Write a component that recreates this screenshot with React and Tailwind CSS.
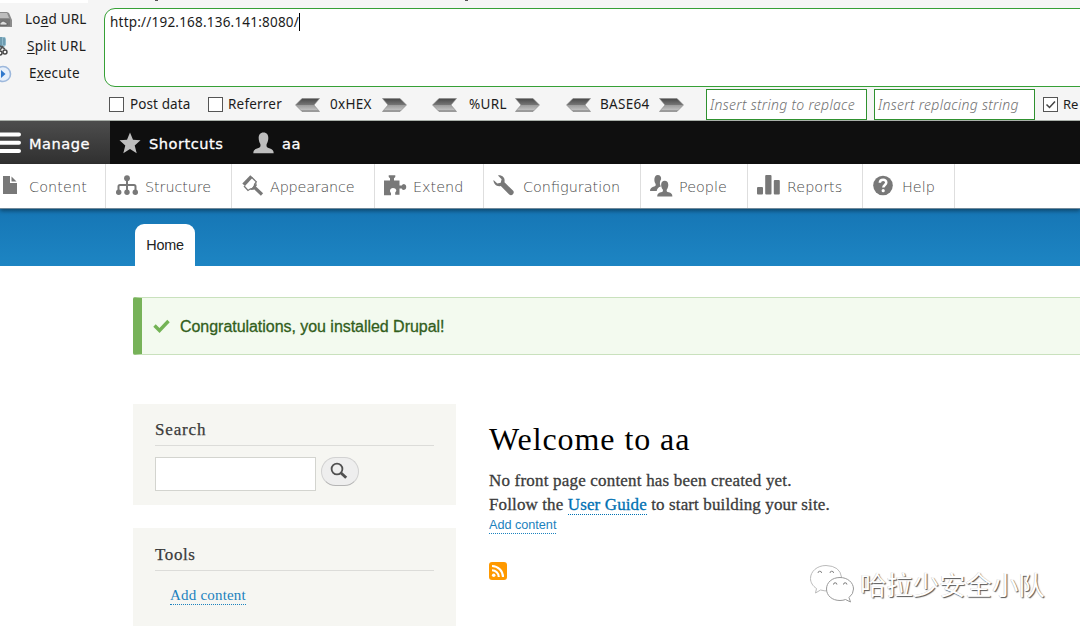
import React from "react";

const sans = "font-['Noto_Sans','Open_Sans',sans-serif]";
const dejavu = "font-['DejaVu_Sans',sans-serif]";
const arial = "font-['Liberation_Sans',Arial,sans-serif]";
const serif = "font-['Liberation_Serif',Georgia,serif]";

function Arrow({ flip, className }) {
  return (
    <svg width="25" height="14" viewBox="0 0 25 14" className={`shrink-0 ${flip ? "-scale-x-100" : ""} ${className || ""}`}>
      <defs>
        <linearGradient id="ar" x1="0" y1="0" x2="0" y2="1">
          <stop offset="0" stopColor="#484848" />
          <stop offset="0.48" stopColor="#757575" />
          <stop offset="0.5" stopColor="#9a9a9a" />
          <stop offset="0.85" stopColor="#bdbdbd" />
          <stop offset="1" stopColor="#777" />
        </linearGradient>
      </defs>
      <path d="M.5 .5H18L24.500 7 18 13.500H.5L6 7Z" fill="url(#ar)" stroke="#888" strokeWidth=".6" />
    </svg>
  );
}

function Box({ checked, className }) {
  return (
    <span className={`block size-[15px] shrink-0 border border-[#555] bg-white ${className}`}>
      {checked && (
        <svg viewBox="0 0 13 13" className="size-[13px]">
          <path d="M2.500 6.500l3 3 5.500-6" fill="none" stroke="#444" strokeWidth="1.500" />
        </svg>
      )}
    </span>
  );
}

const icons = {
  content: (
    <>
      <path d="M3 1h7v7h7v11H3z" />
      <path d="M11.500 1.500v5h5z" />
    </>
  ),
  structure: (
    <>
      <circle cx="11" cy="3.200" r="2.900" />
      <path d="M11 4v14M2.500 17v-5.500q0-1.500 1.500-1.500h14q1.500 0 1.500 1.500V17M11 10v7" fill="none" stroke="#787878" strokeWidth="2" />
      <circle cx="2.700" cy="17.300" r="2.700" />
      <circle cx="11" cy="17.300" r="2.700" />
      <circle cx="19.300" cy="17.300" r="2.700" />
    </>
  ),
  appearance: (
    <>
      <path d="M.3 8.500L8.300 .2l2.500 2.300L3 11z" />
      <path d="M9.800 2.500l4.500 4.300-1.700 2.500-.8 4-3.300.5-2.500 1.700L2 11" fill="none" stroke="#787878" strokeWidth="1.300" />
      <path d="M8 15l6.500-7 .2 2.500-3 4.200z" />
      <path d="M11.500 11.500l8.500 8" stroke="#787878" strokeWidth="3.200" fill="none" />
    </>
  ),
  extend: (
    <path d="M0 5.500h6V3.200L4.700 2V.3h6.600V2L10 3.200v2.300h5.500v5h2.200q.5-1.600 2.300-1.600 2.300.4 2.300 3.100t-2.300 3.100q-1.800 0-2.300-1.600h-2.200v6.200h-4.300v-2.300q1.300-.8 1.100-2.300-.6-2.200-3.300-2.200T6 15.700q-.1 1.500 1 2.300v2.200H0z" />
  ),
  config: (
    <path d="M5 .4c3.600-.7 7 2 6.600 5.600l-.1 1.200 8.700 8.600c1.900 2.200-1.300 6-4 3.800L7.800 11C4 12.200.2 9 .5 4.900l3.800 3.600 3.400-.8.900-3.500z" />
  ),
  people: (
    <>
      <path d="M7.700 0c2.500 0 3.700 1.800 3.400 4.200-.8 1.300-1.200 2.500-1.200 4.300.2 1.500.7 2.300 1 3-2.500.7-3.600 1.800-4.200 4.500H0c0-2.700 1.500-3.700 4.800-4.800 1.300-.7 1-1.700.6-2.800C3.800 6.700 3.800 0 7.700 0z" />
      <path d="M14.700 5.700c4.500 0 4.300 6.300 2.100 8.700-.5 1.800.1 2.300 1.900 2.800 2.500.8 3.700 1.500 3.700 4.200H7.200c0-2.700 1.200-3.400 3.700-4.200 1.800-.5 2.400-1 1.900-2.800-2.300-2.400-2.600-8.700 1.900-8.700z" />
    </>
  ),
  reports: (
    <>
      <rect x="0" y="12" width="6" height="7.500" rx="1" />
      <rect x="8.200" y="0" width="6.300" height="19.500" rx="1" />
      <rect x="16.800" y="5" width="6" height="14.500" rx="1" />
    </>
  ),
  help: (
    <>
      <circle cx="10" cy="10.500" r="9.800" />
      <path d="M6.800 7.800c.2-4 6.600-4 6.500-.2 0 2.300-3 2.400-3 5" fill="none" stroke="#fff" strokeWidth="2.500" />
      <circle cx="10.200" cy="15.700" r="1.600" fill="#fff" />
    </>
  ),
};

const menu = [
  ["content", "Content", "w-[106px] pl-0", "w-[29px]", "tracking-[0.1px]"],
  ["structure", "Structure", "w-[126px] pl-[10px]", "w-[29px]", "tracking-[-0.1px]"],
  ["appearance", "Appearance", "w-[143px] pl-[10px]", "w-[28px]", "tracking-[-0.2px]"],
  ["extend", "Extend", "w-[109px] pl-[9px]", "w-[29px]", ""],
  ["config", "Configuration", "w-[157px] pl-[9px]", "w-[30px]", ""],
  ["people", "People", "w-[107px] pl-[9px]", "w-[29px]", ""],
  ["reports", "Reports", "w-[115px] pl-[9px]", "w-[30px]", ""],
  ["help", "Help", "w-[92px] pl-[10px]", "w-[29px]", ""],
];

function HackBar() {
  return (
    <div className={`flex h-[121px] border-b border-[#aab0aa] bg-[#f5f5f5] text-[13.500px] text-[#1c1c1c] ${sans}`}>
      <div className="w-[104px] shrink-0">
        <div className="h-[3px] w-[88px] bg-white" />
        <div className="mt-[3px] flex h-[27px] items-center">
          <svg width="12" height="16" viewBox="0 0 12 16" className="mr-[13px] shrink-0">
            <path d="M0 0h7l2 1 3 7v7H0z" fill="#8b8b8b" />
            <path d="M0 1h7l2 5H0z" fill="#bdbdbd" />
            <path d="M0 7h10v7H0z" fill="#777" />
            <path d="M0 11l3-2 4 2v2H0z" fill="#ddd" stroke="#555" strokeWidth=".7" />
          </svg>
          <span className="whitespace-nowrap tracking-[0.2px]">Lo<u className="underline-offset-2">a</u>d URL</span>
        </div>
        <div className="flex h-[27px] items-center">
          <svg width="8" height="19" viewBox="0 0 8 19" className="mr-[19px] shrink-0">
            <path d="M0 0h5l1 2v6l-3 3H0z" fill="#8fb9cb" />
            <path d="M1 0v9M4 1v7" stroke="#4f7f95" />
            <path d="M0 9l5 3M3 9l-3 4" stroke="#555" strokeWidth="1.500" />
            <circle cx="5" cy="15" r="2" fill="none" stroke="#444" strokeWidth="1.400" />
            <circle cx="0" cy="16" r="2" fill="none" stroke="#444" strokeWidth="1.400" />
          </svg>
          <span className="whitespace-nowrap tracking-[0.3px]"><u className="underline-offset-2">S</u>plit URL</span>
        </div>
        <div className="flex h-[27px] items-center">
          <svg width="12" height="18" viewBox="0 0 12 18" className="mr-[17px] shrink-0">
            <circle cx="3" cy="9" r="7.500" fill="#e6effa" stroke="#9db8dc" strokeWidth="1.600" />
            <path d="M1 5l4.500 4L1 13z" fill="#2f78cc" />
          </svg>
          <span className="tracking-[0.2px]">E<u className="underline-offset-2">x</u>ecute</span>
        </div>
      </div>
      <div className="min-w-0 flex-1">
        <div className="flex h-2">
          <span className="ml-[51px] h-px w-[3px] bg-[#555]" />
          <span className="ml-[307px] h-px w-[3px] bg-[#555]" />
        </div>
        <div className="h-[79px] w-[990px] rounded-[11px] border border-[#36a036] bg-white pl-[5px] pt-[3px]">
          <span className="inline-block border-r border-black leading-[18px] tracking-[0.210px]">http://192.168.136.141:8080/</span>
        </div>
        <div className="flex h-[33px] items-center whitespace-nowrap pl-[5px] pt-[2px]">
          <Box className="mr-[6px]" />
          <span className="w-[78px] shrink-0 tracking-[0.100px]">Post data</span>
          <Box className="mr-[5px]" />
          <span className="w-[67px] shrink-0 tracking-[0.2px]">Referrer</span>
          <Arrow flip />
          <span className="ml-[10px] w-[52px] shrink-0 tracking-[0.3px]">0xHEX</span>
          <Arrow />
          <Arrow flip className="ml-[25px]" />
          <span className="ml-[12px] w-[46px] shrink-0 tracking-[0.3px]">%URL</span>
          <Arrow />
          <Arrow flip className="ml-[26px]" />
          <span className="ml-[9px] w-[59px] shrink-0 tracking-[0.3px]">BASE64</span>
          <Arrow />
          <span className="ml-[22px] flex h-[31px] w-[161px] shrink-0 items-center border border-[#2f912f] bg-white pl-[3px] text-[14px] font-light italic tracking-[0.3px] text-[#707070]">Insert string to replace</span>
          <span className="ml-[7px] flex h-[31px] w-[161px] shrink-0 items-center border border-[#2f912f] bg-white pl-[3px] text-[14px] font-light italic tracking-[0.3px] text-[#707070]">Insert replacing string</span>
          <Box checked className="ml-[8px] mr-[5px]" />
          <span className="shrink-0 text-[13px]">Re</span>
        </div>
      </div>
    </div>
  );
}

function AdminBar() {
  return (
    <div className={`flex h-[43px] items-center bg-[#0f0f0f] text-[14.600px] tracking-[0.510px] text-white [-webkit-text-stroke:0.3px_white] ${dejavu}`}>
      <div className="flex h-full w-[110px] items-center bg-gradient-to-b from-[#4d4d4d] to-[#303030]">
        <svg width="21" height="22" viewBox="0 0 21 22" className="mr-[8px]">
          <path d="M-3 2.500H19M-3 10.700H19M-3 18.900H19" stroke="#fff" strokeWidth="4" strokeLinecap="round" />
        </svg>
        <span className="pt-[2px]">Manage</span>
      </div>
      <svg width="22" height="22" viewBox="0 0 22 22" className="ml-[9px] mr-[8px]">
        <path d="M11 .5l3 7.300 7.500.5-5.800 5.200 2 7.700L11 17l-6.700 4.200 2-7.700L.5 8.300 8 7.800z" fill="#bebebe" />
      </svg>
      <span className="w-[104px] pt-[2px]">Shortcuts</span>
      <svg width="21" height="22" viewBox="0 0 21 22" className="mr-[8px]">
        <path d="M10.500.5c5.500 0 5.800 6.500 3.300 11.300-1 3 .6 3.900 3.200 4.700 2.500.9 3.700 2 3.700 4.700H.3c0-2.700 1.200-3.800 3.700-4.700 2.600-.8 4.200-1.700 3.200-4.700C4.700 7 5 .5 10.500.5z" fill="#bebebe" />
      </svg>
      <span className="pt-[2px]">aa</span>
    </div>
  );
}

export default function App() {
  return (
    <div className="h-[633px] w-[1080px] overflow-hidden bg-white">
      <HackBar />
      <AdminBar />
      <nav className={`relative flex h-[45px] border-b border-[#71899a] bg-white text-[14.400px] font-extralight text-[#484848] shadow-[0_2px_4px_rgba(0,0,0,0.4)] ${dejavu}`}>
        {menu.map(([id, label, size, iconWidth, tracking]) => (
          <div key={id} className={`flex h-full shrink-0 items-center border-r border-[#dedede] ${size}`}>
            <span className={`shrink-0 ${iconWidth}`}>
              <svg width="23" height="22" viewBox="0 0 23 22" fill="#787878">{icons[id]}</svg>
            </span>
            <span className={`pt-[3px] ${tracking}`}>{label}</span>
          </div>
        ))}
      </nav>
      <div className="flex h-[57px] items-end bg-gradient-to-b from-[#1676b5] to-[#1d85c3] pl-[135px]">
        <div className={`flex h-[42px] w-[60px] items-center justify-center rounded-t-[9px] bg-white pt-[2px] text-[14.400px] tracking-[-0.2px] text-[#222] ${arial}`}>Home</div>
      </div>

      <div className={`ml-[133px] mt-[31px] flex h-[58px] items-center rounded-l-[2px] border-y border-l-[9px] border-y-[#c9e1bd] border-l-[#77b259] bg-[#f3faef] text-[16px] tracking-[-0.040px] text-[#325e1c] [-webkit-text-stroke:0.3px_#325e1c] ${arial}`}>
        <svg width="17" height="14" viewBox="0 0 17 14" className="ml-[11px] mr-[10px]">
          <path d="M1.500 6.500l5 5L15.500 2" fill="none" stroke="#73b355" strokeWidth="3.400" />
        </svg>
        <span className="pt-px">Congratulations, you installed Drupal!</span>
      </div>

      <div className="mt-[49px] flex">
        <aside className={`ml-[133px] w-[323px] shrink-0 text-[#3b3b3b] ${serif}`}>
          <section className="h-[101px] bg-[#f6f6f2] px-[22px] pt-[14px]">
            <h2 className="h-[28px] border-b border-[#dcdcd9] text-[17px] leading-[24px] tracking-[0.850px] [-webkit-text-stroke:0.25px_#3b3b3b]">Search</h2>
            <div className="mt-[11px] flex gap-[5px]">
              <div className="h-[34px] w-[161px] border border-[#d3d4cf] bg-white" />
              <div className="flex h-[29px] w-[38px] justify-center rounded-[15px] border border-[#d2d2d2] border-b-[#b4b4b4] bg-[#eee] pr-[3px] pt-[4px]">
                <svg width="18" height="18" viewBox="0 0 18 18" fill="none" stroke="#505050">
                  <circle cx="7" cy="7" r="5.400" strokeWidth="1.800" />
                  <path d="M10.500 10.500l5.700 5.300" strokeWidth="2.900" />
                </svg>
              </div>
            </div>
          </section>
          <section className="mt-[23px] h-[98px] bg-[#f6f6f2] px-[22px] pt-[15px]">
            <h2 className="h-[28px] border-b border-[#dcdcd9] text-[17px] leading-[24px] tracking-[0.6px] [-webkit-text-stroke:0.25px_#3b3b3b]">Tools</h2>
            <div className="pl-[15px] pt-[12px]">
              <a className="block h-[22px] w-fit border-b border-dotted border-[#1b82be] text-[15px] leading-[25px] tracking-[0.2px] text-[#1b82be]">Add content</a>
            </div>
          </section>
        </aside>
        <main className={`ml-[33px] flex-1 ${serif}`}>
          <h1 className="mt-[15px] h-[40px] text-[32px] leading-[40px] tracking-[0.920px] text-black">Welcome to aa</h1>
          <div className="mt-[10px] text-[17px] leading-6 tracking-[0.190px] text-[#3b3b3b] [-webkit-text-stroke:0.3px_currentColor]">
            <p className="whitespace-nowrap">No front page content has been created yet.</p>
            <p className="whitespace-nowrap tracking-[0.120px]">
              Follow the <a className="border-b border-dotted border-[#0071b3] text-[#0071b3]">User Guide</a> to start building your site.
            </p>
          </div>
          <div className={`h-[17px] text-[12.700px] tracking-[-0.030px] ${arial}`}>
            <a className="block h-[17px] w-fit border-b border-dotted border-[#1b82be] leading-[17px] text-[#1b82be]">Add content</a>
          </div>
          <div className="flex pt-[28px]">
            <svg width="18" height="18" viewBox="0 0 18 18">
              <rect width="18" height="18" rx="3" fill="#ff9900" />
              <circle cx="4.700" cy="13.300" r="1.800" fill="#fff" />
              <path d="M3 8.200a6.800 6.800 0 0 1 6.800 6.800M3 4a11 11 0 0 1 11 11" fill="none" stroke="#fff" strokeWidth="2.100" />
            </svg>
          </div>
        </main>
      </div>

      <div className="absolute left-[809px] top-[564px] flex items-center">
        <svg width="46" height="40" viewBox="0 0 46 40" fill="#fff" stroke="#999" strokeWidth="1">
          <path d="M17 1.500C8 1.500 1.500 7.500 1.500 14.500c0 4 2.300 7.500 6 10L6.500 29l5-3q9 2.500 16-1.500Q33 20 32.500 13 31 2 17 1.500z" stroke="#bbb" />
          <path d="M9 9a1.800 1.800 0 0 1 3.600 0M21 9a1.800 1.800 0 0 1 3.600 0" fill="none" stroke="#888" />
          <path d="M31 13.500c-8 0-13.500 5-13.500 11.500S23 36.500 31 36.500q3 0 5.500-1l5 2.500-1.500-4.500q4.500-3.500 4.500-8.500c0-6.500-6-11.500-13.500-11.500z" />
          <path d="M24.500 20.500a1.700 1.700 0 0 1 3.400 0M34.500 20.500a1.700 1.700 0 0 1 3.400 0" fill="none" stroke="#777" />
        </svg>
        <span className="ml-[5px] whitespace-nowrap font-['Noto_Sans_CJK_SC',sans-serif] text-[26.400px] leading-[40px] text-white [text-shadow:1px_1px_1px_#555,-0.5px_-0.5px_0.5px_#ccc]">哈拉少安全小队</span>
      </div>
    </div>
  );
}
